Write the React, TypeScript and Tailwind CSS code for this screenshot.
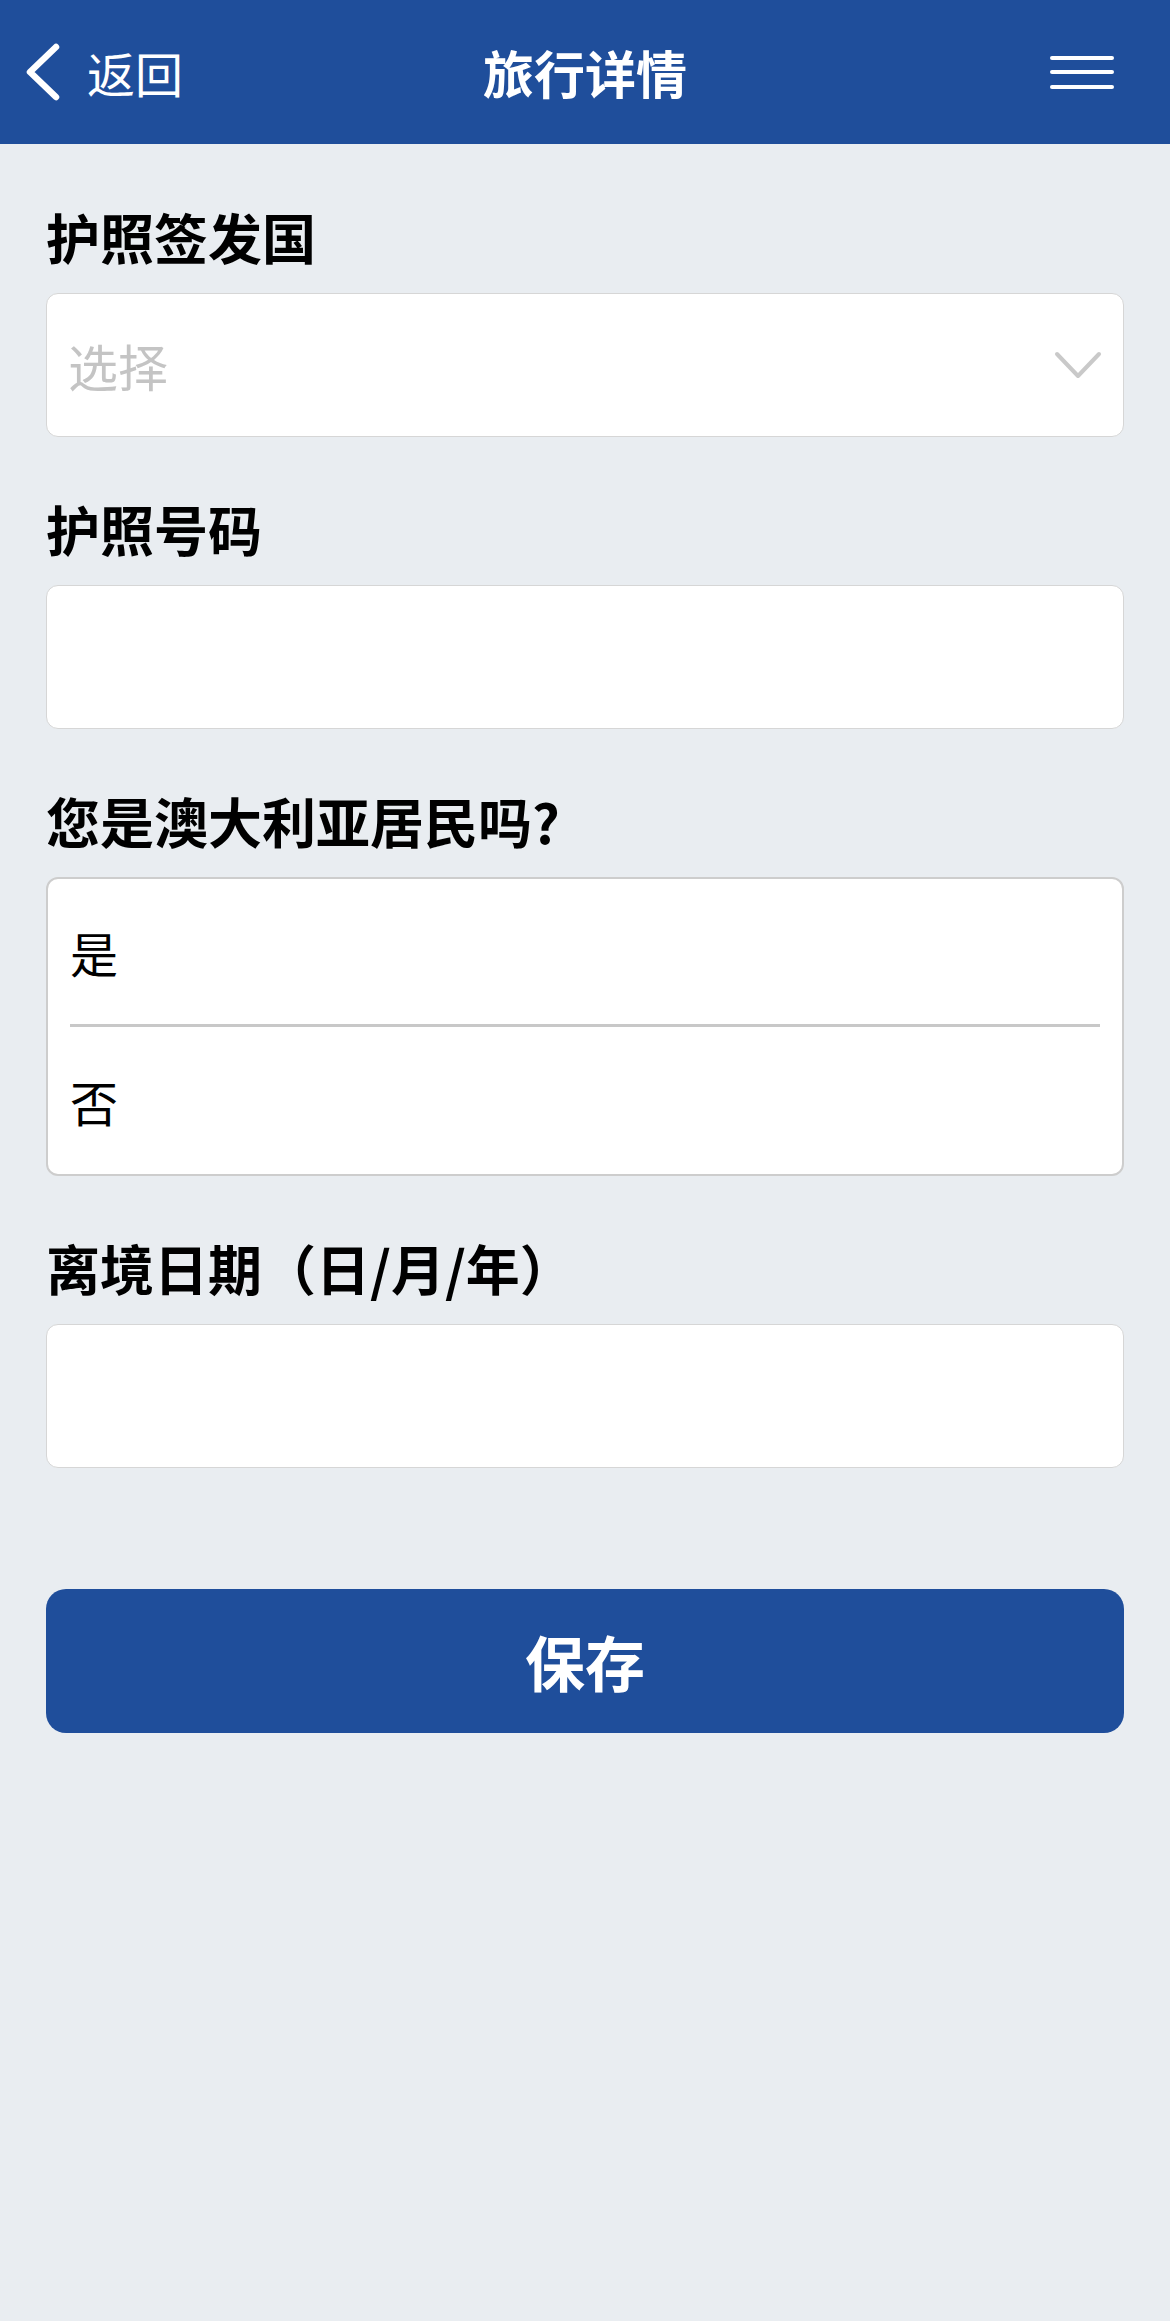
import type { ReactNode } from "react";

const FONT = {
  fontFamily: '"Noto Sans CJK SC", "Noto Sans", sans-serif',
};

function BackChevron() {
  return (
    <svg width="36" height="58" viewBox="0 0 36 58" fill="none">
      <path
        d="M31 4 L5 29 L31 54"
        stroke="white"
        strokeWidth="6.5"
        strokeLinecap="round"
        strokeLinejoin="round"
      />
    </svg>
  );
}

function MenuIcon() {
  return (
    <div className="flex w-[64px] flex-col gap-[10.5px]">
      <span className="h-[4px] rounded-full bg-white" />
      <span className="h-[4px] rounded-full bg-white" />
      <span className="h-[4px] rounded-full bg-white" />
    </div>
  );
}

function ChevronDown() {
  return (
    <svg width="48" height="28" viewBox="0 0 48 28" fill="none">
      <path
        d="M3 3 L24 25 L45 3"
        stroke="#c9c9c9"
        strokeWidth="4"
        strokeLinecap="round"
        strokeLinejoin="round"
      />
    </svg>
  );
}

function Field({ label, first, children }: { label: string; first?: boolean; children: ReactNode }) {
  return (
    <div className={first ? "pt-[55px]" : "pt-[54px]"}>
      <h2 className="text-[54px] leading-[76px] font-bold text-black">{label}</h2>
      <div className="mt-[18px]">{children}</div>
    </div>
  );
}

function TextBox({ children }: { children?: ReactNode }) {
  return (
    <div className="flex h-[144px] items-center rounded-[12px] border border-[#d6d6d6] bg-white px-[21px]">
      {children}
    </div>
  );
}

export default function App() {
  return (
    <div style={FONT} className="min-h-[2321px] w-[1170px] bg-[#e9edf1]">
      <header className="grid h-[144px] grid-cols-[1fr_auto_1fr] items-center bg-[#1f4e9b] text-white">
        <button className="flex items-center gap-[26px] pl-[25px] text-[48px] leading-none">
          <BackChevron />
          <span>返回</span>
        </button>
        <h1 className="text-[51px] font-bold leading-none">旅行详情</h1>
        <div className="flex justify-end pr-[56px]">
          <MenuIcon />
        </div>
      </header>

      <main className="px-[46px]">
        <Field label="护照签发国" first>
          <TextBox>
            <span className="flex-1 text-[50px] leading-none text-[#c4c4c4]">选择</span>
            <ChevronDown />
          </TextBox>
        </Field>

        <Field label="护照号码">
          <TextBox />
        </Field>

        <Field label="您是澳大利亚居民吗?">
          <div className="rounded-[12px] border-2 border-[#cdcdcd] bg-white px-[22px]">
            <div className="flex h-[148px] items-center border-b-[3px] border-[#c8c8c8] text-[48px] text-black">
              是
            </div>
            <div className="flex h-[147px] items-center text-[48px] text-black">否</div>
          </div>
        </Field>

        <Field label="离境日期（日/月/年）">
          <TextBox />
        </Field>

        <button className="mt-[121px] flex h-[144px] w-full items-center justify-center rounded-[20px] bg-[#1f4e9b] text-[60px] font-bold text-white">
          保存
        </button>
      </main>
    </div>
  );
}
